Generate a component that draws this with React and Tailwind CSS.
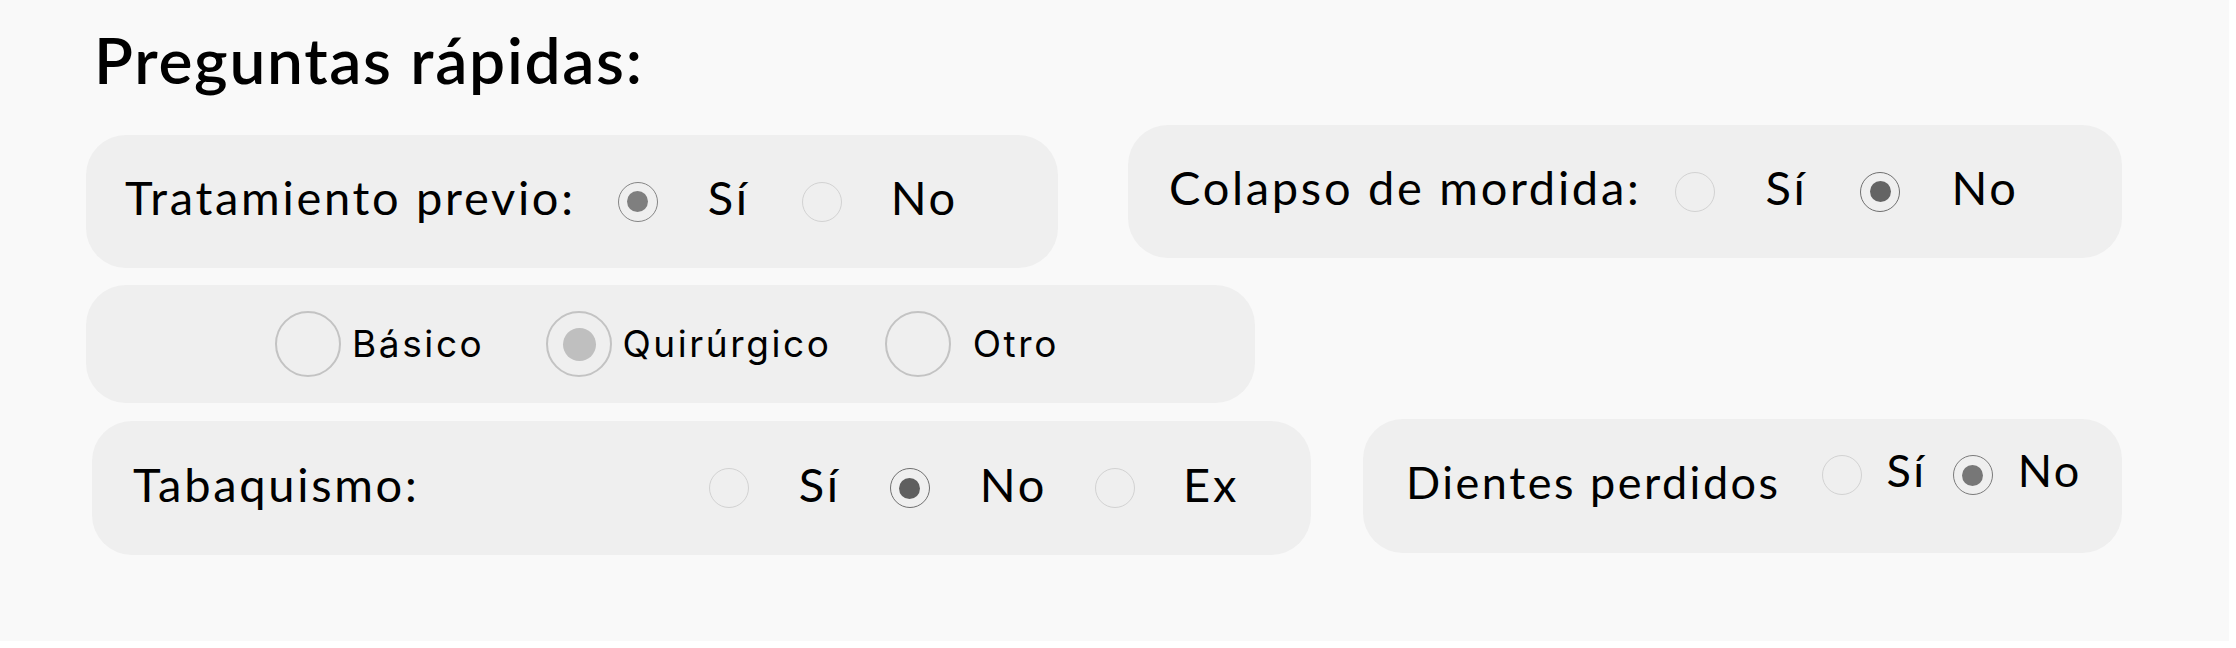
import React, { useState } from 'react';

const labelFont = { fontFamily: '"Lato", "Noto Sans", sans-serif' };

function Dot({ checked, ring, dot }) {
  return (
    <span
      className={`flex h-10 w-10 shrink-0 items-center justify-center rounded-full border-[1.5px] ${ring}`}
    >
      {checked && <span className={`h-[21px] w-[21px] rounded-full ${dot}`}></span>}
    </span>
  );
}

function BigDot({ checked }) {
  return (
    <span className="flex h-[66px] w-[66px] shrink-0 items-center justify-center rounded-full border-2 border-[#c3c3c3]">
      {checked && <span className="h-[33px] w-[33px] rounded-full bg-[#bfbfbf]"></span>}
    </span>
  );
}

function App() {
  const [previo, setPrevio] = useState('si');
  const [colapso, setColapso] = useState('no');
  const [tipo, setTipo] = useState('quirurgico');
  const [tabaco, setTabaco] = useState('no');
  const [dientes, setDientes] = useState('no');

  return (
    <div className="h-[641px] w-[2229px] bg-[#f9f9f9] text-black">
      <h1
        className="pl-[94px] pt-[28px] text-[64px] font-semibold leading-none tracking-[1.7px]"
        style={{ fontFamily: '"Lato", sans-serif' }}
      >
        Preguntas rápidas:
      </h1>

      {/* fila 1 */}
      <div className="mt-[33px] flex items-start pl-[86px]">
        <div
          className="mt-[10px] flex h-[133px] w-[972px] items-center rounded-[40px] bg-[#efefef] pl-[39px] text-[47px] tracking-[2.7px]"
          style={labelFont}
        >
          <span className="pb-[8px]">Tratamiento previo:</span>
          <button className="ml-[42px]" onClick={() => setPrevio('si')}>
            <Dot checked={previo === 'si'} ring={previo === 'si' ? 'border-[#858585]' : 'border-[#d2d2d2]'} dot="bg-[#7f7f7f]" />
          </button>
          <span className="ml-[50px] pb-[8px]">Sí</span>
          <button className="ml-[52px]" onClick={() => setPrevio('no')}>
            <Dot checked={previo === 'no'} ring={previo === 'no' ? 'border-[#858585]' : 'border-[#d2d2d2]'} dot="bg-[#7f7f7f]" />
          </button>
          <span className="ml-[49px] pb-[8px]">No</span>
        </div>

        <div
          className="ml-[70px] flex h-[133px] w-[994px] items-center rounded-[40px] bg-[#efefef] pl-[41px] text-[47px] tracking-[2.7px]"
          style={labelFont}
        >
          <span className="pb-[8px]">Colapso de mordida:</span>
          <button className="ml-[34px]" onClick={() => setColapso('si')}>
            <Dot checked={colapso === 'si'} ring={colapso === 'si' ? 'border-[#6f6f6f]' : 'border-[#d2d2d2]'} dot="bg-[#646464]" />
          </button>
          <span className="ml-[50px] pb-[8px]">Sí</span>
          <button className="ml-[53px]" onClick={() => setColapso('no')}>
            <Dot checked={colapso === 'no'} ring={colapso === 'no' ? 'border-[#6f6f6f]' : 'border-[#d2d2d2]'} dot="bg-[#646464]" />
          </button>
          <span className="ml-[51px] pb-[8px]">No</span>
        </div>
      </div>

      {/* fila 2 */}
      <div className="mt-[17px] pl-[86px]">
        <div
          className="flex h-[118px] w-[1169px] items-center rounded-[40px] bg-[#efefef] pl-[189px] text-[37px]"
          style={{ fontFamily: '"Inter", "Noto Sans", sans-serif' }}
        >
          <button className="flex items-center tracking-[2.6px]" onClick={() => setTipo('basico')}>
            <BigDot checked={tipo === 'basico'} />
            <span className="ml-[11px]">Básico</span>
          </button>
          <button className="ml-[62px] flex items-center tracking-[2.6px]" onClick={() => setTipo('quirurgico')}>
            <BigDot checked={tipo === 'quirurgico'} />
            <span className="ml-[10px]">Quirúrgico</span>
          </button>
          <button className="ml-[53px] flex items-center tracking-[2.6px]" onClick={() => setTipo('otro')}>
            <BigDot checked={tipo === 'otro'} />
            <span className="ml-[22px]">Otro</span>
          </button>
        </div>
      </div>

      {/* fila 3 */}
      <div className="mt-[16px] flex items-start pl-[92px]">
        <div
          className="mt-[2px] flex h-[134px] w-[1219px] items-center rounded-[40px] bg-[#efefef] pl-[41px] pr-[72px] text-[47px] tracking-[2.7px]"
          style={labelFont}
        >
          <span className="pb-[8px]">Tabaquismo:</span>
          <div className="ml-auto flex items-center">
            <button onClick={() => setTabaco('si')}>
              <Dot checked={tabaco === 'si'} ring={tabaco === 'si' ? 'border-[#6f6f6f]' : 'border-[#d2d2d2]'} dot="bg-[#5f5f5f]" />
            </button>
            <span className="ml-[50px] pb-[8px]">Sí</span>
            <button className="ml-[49px]" onClick={() => setTabaco('no')}>
              <Dot checked={tabaco === 'no'} ring={tabaco === 'no' ? 'border-[#6f6f6f]' : 'border-[#d2d2d2]'} dot="bg-[#5f5f5f]" />
            </button>
            <span className="ml-[50px] pb-[8px]">No</span>
            <button className="ml-[48px]" onClick={() => setTabaco('ex')}>
              <Dot checked={tabaco === 'ex'} ring={tabaco === 'ex' ? 'border-[#6f6f6f]' : 'border-[#d2d2d2]'} dot="bg-[#5f5f5f]" />
            </button>
            <span className="ml-[48px] pb-[8px]">Ex</span>
          </div>
        </div>

        <div
          className="ml-[52px] flex h-[134px] w-[759px] items-center rounded-[40px] bg-[#efefef] pl-[43px] text-[45px] tracking-[2.5px]"
          style={labelFont}
        >
          <span className="pb-[6px]">Dientes perdidos</span>
          <div className="mb-[22px] flex items-center">
            <button className="ml-[41px]" onClick={() => setDientes('si')}>
              <Dot checked={dientes === 'si'} ring={dientes === 'si' ? 'border-[#7a7a7a]' : 'border-[#d2d2d2]'} dot="bg-[#777777]" />
            </button>
            <span className="ml-[25px] pb-[8px]">Sí</span>
            <button className="ml-[26px]" onClick={() => setDientes('no')}>
              <Dot checked={dientes === 'no'} ring={dientes === 'no' ? 'border-[#7a7a7a]' : 'border-[#d2d2d2]'} dot="bg-[#777777]" />
            </button>
            <span className="ml-[25px] pb-[8px]">No</span>
          </div>
        </div>
      </div>
    </div>
  );
}

export default App;
